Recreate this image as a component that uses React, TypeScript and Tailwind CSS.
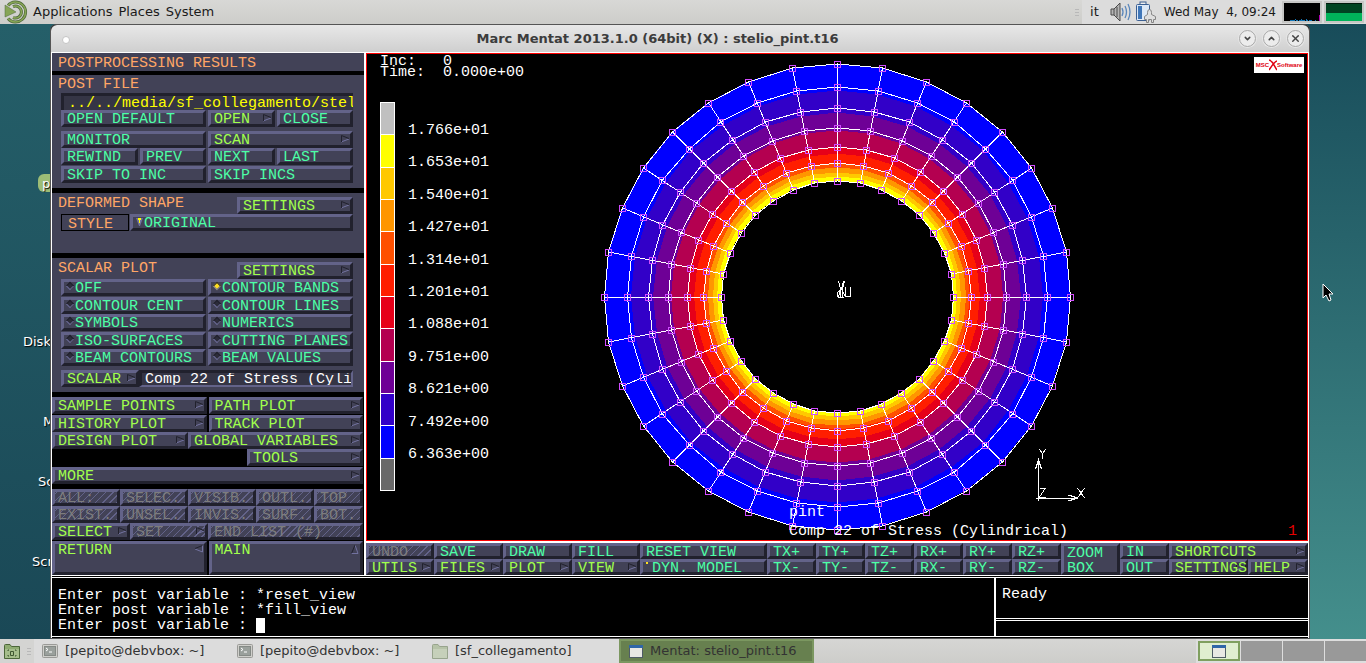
import type { ReactNode } from 'react'
import { ChevronDown, ChevronUp, X } from 'lucide-react'

const legend = [
  { color: '#c0c0c0', label: '1.766e+01' },
  { color: '#ffff00', label: '1.653e+01' },
  { color: '#ffc800', label: '1.540e+01' },
  { color: '#ff9600', label: '1.427e+01' },
  { color: '#ff5000', label: '1.314e+01' },
  { color: '#ff1e00', label: '1.201e+01' },
  { color: '#e60019', label: '1.088e+01' },
  { color: '#b40050', label: '9.751e+00' },
  { color: '#6e0096', label: '8.621e+00' },
  { color: '#3200c8', label: '7.492e+00' },
  { color: '#0000ff', label: '6.363e+00' },
  { color: '#696969', label: '' },
]

// outer radius of every contour band, from the rim inwards
const bands = [
  { r: 233, color: '#0000ff' },
  { r: 206, color: '#3200c8' },
  { r: 184, color: '#6e0096' },
  { r: 166, color: '#b40050' },
  { r: 150, color: '#e60019' },
  { r: 143, color: '#ff1e00' },
  { r: 133, color: '#ff5000' },
  { r: 129, color: '#ff9600' },
  { r: 124, color: '#ffc800' },
  { r: 120, color: '#ffff00' },
  { r: 116, color: '#000000' },
]

const meshRadii = [233, 210, 189, 169, 150, 134, 116]
const sectors = Array.from({ length: 32 }, (_, i) => (i * Math.PI) / 16)
const cx = 837
const cy = 296

const point = (r: number, a: number) => [Math.round(cx + r * Math.cos(a)), Math.round(cy + r * Math.sin(a))]
const ring = (r: number) => sectors.map((a) => point(r, a).join(',')).join(' ')

const tones = {
  mint: 'text-[#4dffa6]',
  lime: 'text-[#a0ff4d]',
  orange: 'text-[#ffa666]',
  off: 'text-[#7d7d7d]',
}

const heights = {
  row: 'h-[17px]',
  short: 'h-4',
  shortDouble: 'h-8',
  double: 'h-[34px]',
}

const raised =
  'relative flex min-w-0 items-start whitespace-pre border-[3px] border-t-[#636389] border-l-[#636389] border-r-[#21212d] border-b-[#21212d] bg-[#424257] pl-[3px] text-left leading-[14px]'
const hatch =
  'bg-[repeating-linear-gradient(135deg,#636389_0px,#636389_1px,transparent_1px,transparent_5px)] bg-origin-border'

type Dir = 'right' | 'left' | 'up'

const Arrow = ({ dir }: { dir: Dir }) => (
  <svg className="absolute top-0 right-0" width="10" height="10" viewBox="0 0 10 10" fill="none">
    {dir === 'right' && (
      <>
        <path d="M9 5L1 8" stroke="#7272a0" />
        <path d="M1.500 8V1.500L9 4.500" stroke="#21212d" />
      </>
    )}
    {dir === 'left' && (
      <>
        <path d="M8.500 1V8L1 5" stroke="#7272a0" />
        <path d="M1 4.500L8.500 1.500" stroke="#21212d" />
      </>
    )}
    {dir === 'up' && (
      <>
        <path d="M5 1L8 9.500H1" stroke="#7272a0" />
        <path d="M5 1L1.500 9.500" stroke="#21212d" />
      </>
    )}
  </svg>
)

type KeyProps = {
  children: ReactNode
  tone?: keyof typeof tones
  size?: keyof typeof heights
  arrow?: Dir
  className?: string
}

const Key = ({ children, tone = 'mint', size = 'row', arrow, className = '' }: KeyProps) => (
  <button
    type="button"
    disabled={tone === 'off'}
    className={`${raised} ${heights[size]} ${tones[tone]} ${tone === 'off' ? hatch : ''} ${className}`}
  >
    {arrow && <Arrow dir={arrow} />}
    <span className="relative">{children}</span>
  </button>
)

const Option = ({ label, checked = false }: { label: string; checked?: boolean }) => (
  <label className={`${raised} h-[17px] gap-[2px] ${tones.mint}`}>
    <input
      type="radio"
      name="scalar-plot"
      defaultChecked={checked}
      className="mt-px size-[6px] shrink-0 rotate-45 appearance-none border border-t-[#21212d] border-r-[#636389] border-b-[#7272a0] border-l-[#21212d] bg-[#2c2c3a] checked:bg-yellow-300"
    />
    {label}
  </label>
)

const options = [
  'OFF',
  'CONTOUR BANDS',
  'CONTOUR CENT',
  'CONTOUR LINES',
  'SYMBOLS',
  'NUMERICS',
  'ISO-SURFACES',
  'CUTTING PLANES',
  'BEAM CONTOURS',
  'BEAM VALUES',
]

const section = 'border-b-[5px] border-black bg-[#424257] pr-[11px] pl-[9px]'
const halves = 'grid grid-cols-2 gap-x-[2px]'

const SideMenu = () => (
  <aside className="w-[314px] shrink-0 border-r-2 border-white bg-black">
    <h2 className="border-b-4 border-black bg-[#424257] pt-[4px] pl-[6px] leading-[14px] text-[#ffa666]">POSTPROCESSING RESULTS</h2>

    <section className={`${section} pb-[5px]`}>
      <label htmlFor="post-file" className="-ml-[3px] block pt-px leading-[17px] text-[#ffa666]">
        POST FILE
      </label>
      <input
        id="post-file"
        defaultValue="../../media/sf_collegamento/stel"
        className="block h-[17px] w-full border-t-[3px] border-l-[3px] border-t-[#21212d] border-l-[#21212d] bg-[#353545] pl-[4px] leading-[14px] text-[#ffff00]"
      />
      <div className="grid grid-cols-[145fr_67fr_76fr] gap-x-[2px]">
        <Key>OPEN DEFAULT</Key>
        <Key tone="lime" arrow="right">OPEN</Key>
        <Key>CLOSE</Key>
      </div>
      <div className={`${halves} mt-[4px]`}>
        <Key>MONITOR</Key>
        <Key tone="lime" arrow="right">SCAN</Key>
      </div>
      <div className="grid grid-cols-[77fr_66fr_67fr_76fr] gap-x-[2px]">
        <Key>REWIND</Key>
        <Key>PREV</Key>
        <Key>NEXT</Key>
        <Key>LAST</Key>
      </div>
      <div className={`${halves} mt-px`}>
        <Key>SKIP TO INC</Key>
        <Key>SKIP INCS</Key>
      </div>
    </section>

    <section className={`${section} pt-[4px] pb-[22px]`}>
      <div className="flex justify-between">
        <h3 className="-ml-[3px] leading-[14px] text-[#ffa666]">DEFORMED SHAPE</h3>
        <Key tone="lime" arrow="right" className="w-[116px]">SETTINGS</Key>
      </div>
      <div className="flex gap-x-px">
        <label htmlFor="style" className="h-[17px] w-[68px] border border-black pl-[6px] leading-[20px] text-[#ffa666]">
          STYLE
        </label>
        <div className={`${raised} h-[17px] flex-1 ${tones.mint}`}>
          <svg className="mt-px mr-px" width="7" height="8" viewBox="0 0 7 8">
            <path d="M0 0H7L4 8H3Z" fill="#7272a0" />
            <path d="M2 0H5V2H4V5H3V2H2Z" fill="#ffff00" />
          </svg>
          <select id="style" className="h-[14px] min-w-0 flex-1 appearance-none leading-[14px]">
            <option>ORIGINAL</option>
          </select>
        </div>
      </div>
    </section>

    <section className={`${section} pt-[4px] pb-[5px]`}>
      <div className="flex justify-between">
        <h3 className="-ml-[3px] leading-[14px] text-[#ffa666]">SCALAR PLOT</h3>
        <Key tone="lime" arrow="right" className="w-[116px]">SETTINGS</Key>
      </div>
      <div className={`${halves} h-[87px] content-between`}>
        {options.map((label) => (
          <Option key={label} label={label} checked={label === 'CONTOUR BANDS'} />
        ))}
      </div>
      <div className="mt-[4px] flex">
        <Key tone="lime" arrow="right" className="w-[78px]">SCALAR</Key>
        <input
          aria-label="Scalar"
          defaultValue="Comp 22 of Stress (Cyli"
          className="h-[17px] min-w-0 flex-1 border-[3px] border-t-[#21212d] border-r-2 border-b-2 border-r-[#636389] border-b-[#636389] border-l-[#21212d] bg-[#353545] pl-[3px] text-white"
        />
      </div>
    </section>

    <nav className="pr-px pb-[5px]">
      <div className={`${halves} gap-y-px`}>
        <Key tone="lime" arrow="right">SAMPLE POINTS</Key>
        <Key tone="lime" arrow="right">PATH PLOT</Key>
        <Key tone="lime" arrow="right">HISTORY PLOT</Key>
        <Key tone="lime" arrow="right">TRACK PLOT</Key>
      </div>
      <div className="grid grid-cols-[136fr_175fr]">
        <Key tone="lime" arrow="right">DESIGN PLOT</Key>
        <Key tone="lime" arrow="right">GLOBAL VARIABLES</Key>
      </div>
      <Key tone="lime" arrow="right" className="ml-auto w-[116px]">TOOLS</Key>
      <Key tone="lime" arrow="right" className="mt-px w-full">MORE</Key>
    </nav>

    <div className="pr-px">
      <div className="grid grid-cols-[68fr_68fr_68fr_58fr_49fr]">
        {['ALL:', 'SELEC.', 'VISIB.', 'OUTL.', 'TOP', 'EXIST.', 'UNSEL.', 'INVIS.', 'SURF.', 'BOT.'].map((label) => (
          <Key key={label} tone="off">{label}</Key>
        ))}
      </div>
      <div className="grid grid-cols-[78fr_78fr_155fr]">
        <Key tone="lime" arrow="right">SELECT</Key>
        <Key tone="off" arrow="right">SET</Key>
        <Key tone="off">END LIST (#)</Key>
      </div>
      <div className={`${halves} mt-px`}>
        <Key tone="lime" size="double" arrow="left">RETURN</Key>
        <Key tone="lime" size="double" arrow="up">MAIN</Key>
      </div>
    </div>
  </aside>
)

const Mesh = () => (
  <svg
    className="absolute inset-0 size-full"
    viewBox="367 54 940 485"
    fill="none"
    stroke="white"
    strokeWidth="1"
    shapeRendering="crispEdges"
  >
    {bands.map((b) => (
      <polygon key={b.r} points={ring(b.r)} fill={b.color} stroke="none" />
    ))}
    <g transform="translate(0.5 0.5)">
      {meshRadii.map((r) => (
        <polygon key={r} points={ring(r)} />
      ))}
      {sectors.map((a) => {
        const [x1, y1] = point(116, a)
        const [x2, y2] = point(233, a)
        return <line key={a} x1={x1} y1={y1} x2={x2} y2={y2} />
      })}
      {meshRadii.map((r) =>
        sectors.map((a) => {
          const [x, y] = point(r, a)
          return <rect key={`${r}-${a}`} x={x - 3} y={y - 3} width="6" height="6" stroke="#d14dff" />
        }),
      )}
      <path d="M838 280L840 288L838 296M843 280L841 288L845 296M837 296H843M837 296V292L839 289M840 288V296M844 280L842 288V296M845 286V295H850V286" />
      <path d="M1038 500V459M1035 468L1038 459L1041 468M1035 497H1077M1068 494L1077 497L1068 500" />
      <path d="M1039 448L1042 453L1045 448M1042 453V458M1077 487L1084 497M1084 487L1077 497M1039 487H1045L1039 496H1045" />
    </g>
    <g fill="white" stroke="none" className="font-['Liberation_Mono',monospace] text-[15px]">
      <text x="789" y="515">pint</text>
      <text x="789" y="534">Comp 22 of Stress (Cylindrical)</text>
      <text x="1288" y="534" fill="#e60000">1</text>
    </g>
  </svg>
)

const Viewport = () => (
  <div className="relative flex-1 border border-[#f00] bg-black pt-[2px] pl-[13px] text-white">
    <Mesh />
    <div className="relative whitespace-pre leading-[11px]">
      <p>Inc:   0</p>
      <p>Time:  0.000e+00</p>
    </div>
    <div className="relative mt-[24px] flex gap-x-[13px]">
      <ul className="flex h-[389px] w-[15px] flex-col gap-px border border-white bg-white">
        {legend.map((l) => (
          <li key={l.color} className="flex-1" style={{ backgroundColor: l.color }} />
        ))}
      </ul>
      <ul className="mt-[12px] flex h-[357px] flex-col">
        {legend.slice(0, -1).map((l) => (
          <li key={l.label} className="flex flex-1 items-center">{l.label}</li>
        ))}
      </ul>
    </div>
    <div className="absolute top-[3px] right-[3px] flex h-4 w-[50px] items-center justify-center bg-white font-['Liberation_Sans',sans-serif] text-[6px] font-bold text-[#e00010]">
      MSC
      <svg width="8" height="12" viewBox="0 0 8 12" fill="none" stroke="#e00010">
        <path d="M0 1C4 2 5 7 8 11M8 2C5 3 2 8 0 11" strokeWidth="1.500" />
      </svg>
      Software
    </div>
  </div>
)

const Toolbar = () => (
  <div className="grid grid-cols-[68fr_69fr_69fr_68fr_127fr_49fr_49fr_49fr_49fr_49fr_49fr_59fr_49fr_79fr_60fr] border-t-2 border-white bg-[#21212d]">
    <Key size="short" tone="off">UNDO</Key>
    <Key size="short">SAVE</Key>
    <Key size="short">DRAW</Key>
    <Key size="short">FILL</Key>
    <Key size="short">RESET VIEW</Key>
    {['TX+', 'TY+', 'TZ+', 'RX+', 'RY+', 'RZ+'].map((label) => (
      <Key key={label} size="short">{label}</Key>
    ))}
    <Key size="shortDouble" className="row-span-2">
      <span className="block leading-[15px]">ZOOM<br />BOX</span>
    </Key>
    <Key size="short">IN</Key>
    <Key size="short" tone="lime" arrow="right" className="col-span-2">SHORTCUTS</Key>
    <Key size="short" tone="lime" arrow="right">UTILS</Key>
    <Key size="short" tone="lime" arrow="right">FILES</Key>
    <Key size="short" tone="lime" arrow="right">PLOT</Key>
    <Key size="short" tone="lime" arrow="right">VIEW</Key>
    <Key size="short">
      <i className="mr-[4px] inline-block size-[2px] -translate-y-2 bg-yellow-300" />
      DYN. MODEL
    </Key>
    {['TX-', 'TY-', 'TZ-', 'RX-', 'RY-', 'RZ-'].map((label) => (
      <Key key={label} size="short">{label}</Key>
    ))}
    <Key size="short">OUT</Key>
    <Key size="short" tone="lime" arrow="right">SETTINGS</Key>
    <Key size="short" tone="lime" arrow="right">HELP</Key>
  </div>
)

const Console = () => (
  <div className="flex border-t border-white bg-black pt-px pb-px text-white">
    <div className="flex-1 border-t border-b border-white pt-[10px] pb-[3px] pl-[6px] leading-[15px]">
      <p>Enter post variable : *reset_view</p>
      <p>Enter post variable : *fill_view</p>
      <div className="flex">
        <label htmlFor="command" className="whitespace-pre">{'Enter post variable : '}</label>
        <span className="h-[15px] w-[9px] bg-white" />
        <input id="command" className="h-[15px] min-w-0 flex-1 outline-none" />
      </div>
    </div>
    <div className="flex w-[314px] flex-col gap-px border-l-2 border-white">
      <div className="flex-1 border-t border-b border-white pt-[9px] pl-[6px]">Ready</div>
      <div className="h-[17px] border-t border-b border-white" />
    </div>
  </div>
)

const round =
  'flex size-[17px] items-center justify-center rounded-full border border-[#a8a8a8] bg-[#ececec] text-[#444] shadow-[0_0_0_1px_#e6e6e6]'

const MentatWindow = () => (
  <main className="relative mr-[56px] ml-[50px] flex flex-1 flex-col rounded-t-md border border-[#555] bg-black">
    <header className="relative flex h-[27px] items-center rounded-t-md bg-linear-to-b from-[#e8e8e8] to-[#cfcfcf] pr-[5px] pl-[11px]">
      <span className="mt-[3px] size-[8px] rounded-full border border-[#c4c4c4] bg-white" />
      <h1 className="flex-1 pl-[6px] text-center font-['DejaVu_Sans',sans-serif] text-[13px] font-bold text-[#3c3c3c]">
        Marc Mentat 2013.1.0 (64bit) (X) : stelio_pint.t16
      </h1>
      <div className="flex gap-[7px]">
        <button type="button" aria-label="Minimize" className={round}><ChevronDown size={9} strokeWidth={4} /></button>
        <button type="button" aria-label="Maximize" className={round}><ChevronUp size={9} strokeWidth={4} /></button>
        <button type="button" aria-label="Close" className={round}><X size={11} strokeWidth={3} /></button>
      </div>
    </header>
    <div className="flex flex-1 flex-col border-x border-t border-white font-['Liberation_Mono',monospace] text-[15px] leading-[15px]">
      <div className="flex">
        <SideMenu />
        <div className="flex min-w-0 flex-1 flex-col">
          <Viewport />
          <Toolbar />
        </div>
      </div>
      <Console />
    </div>
  </main>
)

const MateLogo = () => (
  <svg width="24" height="24" viewBox="0 0 24 24" fill="none">
    <path d="M4 5.500A10 10 0 1 1 4 18.500" stroke="#4f6a3c" strokeWidth="3" />
    <path d="M4 5.500A10 10 0 1 1 4 18.500" stroke="#87a556" strokeWidth="1.500" />
    <path d="M9 6.500A6 6 0 1 1 9 17.500" stroke="#4f6a3c" strokeWidth="3" />
    <path d="M9 6.500A6 6 0 1 1 9 17.500" stroke="#87a556" strokeWidth="1.500" />
    <path d="M1 5L12 12L1 17Z" fill="#87a556" stroke="#4f6a3c" strokeWidth="0.500" />
  </svg>
)

const Speaker = () => (
  <svg width="23" height="22" viewBox="0 0 23 22" fill="none">
    <path d="M1 8H4L10 2V20L4 14H1Z" fill="#b5b5b5" stroke="#4a4a4a" />
    <path d="M4 8V14M7 6V16" stroke="#4a4a4a" />
    <path d="M12 7Q14 11 12 15M15 5Q18 11 15 17M18 3Q22 11 18 19" stroke="#5b87bb" strokeWidth="1.300" />
  </svg>
)

const Battery = () => (
  <svg width="22" height="22" viewBox="0 0 22 22">
    <rect x="5" y="1" width="6" height="3" fill="#eee" stroke="#3b5f92" />
    <rect x="1.500" y="3.500" width="13" height="16" rx="1" fill="#dce8f6" stroke="#3b5f92" />
    <path d="M3 5H7V18H3Z" fill="#3f76b8" />
    <path d="M9.500 18.500V15.500L12.500 13.500V11.500Q12.500 8.500 14.500 8.500Q16.500 8.500 16.500 11.500V13.500L20.500 15.500V18.500H18.500V21.500H16.500V18.500H13.500V21.500H11.500V18.500Z" fill="#dedede" stroke="#858585" />
  </svg>
)

const Terminal = () => (
  <svg width="16" height="14" viewBox="0 0 16 14">
    <rect x="0.500" y="0.500" width="15" height="13" rx="1" fill="#cfcfcb" stroke="#9a9a97" />
    <rect x="2.500" y="2.500" width="11" height="9" fill="#9aa09c" stroke="#858a86" />
    <path d="M4 4L6 5.500L4 7M7 8H10" stroke="white" fill="none" />
  </svg>
)

const Folder = ({ home = false }: { home?: boolean }) => (
  <svg width="16" height="15" viewBox="0 0 16 15">
    <path d="M0.500 14.500V1.500Q0.500 0.500 1.500 0.500H6L7.500 2.500H15.500V14.500Z" fill={home ? '#8fac72' : '#b6c3a8'} stroke={home ? '#4c6739' : '#98a48d'} />
    <path d="M1 5H15V14H1Z" fill={home ? '#a6be8c' : '#c6d0ba'} />
    {home && <path d="M4 7V6H5M11 6H12V7M12 11V12H11M5 12H4V11M6.500 7.500H9.500V11.500H6.500Z" stroke="#3f5730" fill="none" />}
  </svg>
)

const AppWindow = () => (
  <svg width="14" height="13" viewBox="0 0 14 13">
    <rect x="0.500" y="0.500" width="13" height="12" fill="#e8e8e4" stroke="#4f5c66" />
    <rect x="0" y="0" width="14" height="3" fill="#2f66a8" />
  </svg>
)

const Grip = () => (
  <span className="flex flex-col gap-[2px]">
    <i className="h-px w-1 bg-[#b8b8b8]" />
    <i className="h-px w-1 bg-[#b8b8b8]" />
    <i className="h-px w-1 bg-[#b8b8b8]" />
  </span>
)

const TopPanel = () => (
  <header className="flex h-6 items-center bg-linear-to-b from-[#d8d8d6] to-[#cdcdca] pl-[4px] text-[#1a1a1a]">
    <MateLogo />
    <nav className="ml-[5px] flex gap-[6px]">
      <button type="button">Applications</button>
      <button type="button">Places</button>
      <button type="button">System</button>
    </nav>
    <span className="mr-[3px] ml-auto"><Grip /></span>
    <div className="flex h-6 items-center bg-[#dcdcdc] pr-[2px]">
      <span className="ml-[8px]">it</span>
      <span className="ml-[11px]"><Speaker /></span>
      <span className="ml-[2px]"><Battery /></span>
      <time className="ml-[7px] whitespace-pre text-[12px]">Wed May  4, 09:24</time>
      <svg className="ml-[6px]" width="40" height="22" shapeRendering="crispEdges">
        <rect width="40" height="22" fill="#c6c6c4" />
        <rect x="2" y="2" width="36" height="18" fill="black" />
        <path d="M8 19.500H13M14 19.500H16M17 19.500H23M24 19.500H26M27 19.500H30M33 19.500H34M13 18.500H14M19 18.500H20M24 18.500H25" stroke="#1477b8" />
        <rect x="37" y="14" width="1" height="6" fill="#b000b0" />
      </svg>
      <svg className="ml-[2px]" width="40" height="22" shapeRendering="crispEdges">
        <rect width="40" height="22" fill="#c6c6c4" />
        <rect x="2" y="2" width="36" height="18" fill="#001a0c" />
        <rect x="2" y="3" width="36" height="9" fill="#004422" />
        <rect x="2" y="12" width="36" height="8" fill="#00b45a" />
      </svg>
    </div>
  </header>
)

const tab = 'flex w-[195px] items-center gap-[7px] pl-[8px] text-left'

const Taskbar = () => (
  <footer className="flex h-6 items-stretch bg-linear-to-b from-[#d6d6d4] to-[#cdcdca] text-[#333]">
    <div className="flex bg-[#dcdcdc]">
      <button type="button" aria-label="Show desktop" className="flex w-6 items-center justify-center bg-[#d4d4d2]"><Folder home /></button>
      <span className="flex w-[10px] items-center justify-center bg-[#d4d4d2]"><Grip /></span>
      <button type="button" className={tab}><Terminal />[pepito@debvbox: ~]</button>
      <button type="button" className={tab}><Terminal />[pepito@debvbox: ~]</button>
      <button type="button" className={tab}><Folder />[sf_collegamento]</button>
      <button type="button" className={`${tab} border-2 border-[#7b9760] bg-[#67804f]`}><AppWindow />Mentat: stelio_pint.t16</button>
    </div>
    <div className="ml-auto flex gap-px border-2 border-r-0 border-[#dedede] bg-[#dedede]">
      <button type="button" aria-label="Workspace 1" className="flex w-[42px] items-center justify-center border-2 border-[#7f9f5f] bg-[#e0eed0]"><AppWindow /></button>
      <button type="button" aria-label="Workspace 2" className="w-[41px] bg-[#999]" />
      <button type="button" aria-label="Workspace 3" className="w-[41px] bg-[#999]" />
      <button type="button" aria-label="Workspace 4" className="w-[41px] bg-[#999]" />
    </div>
  </footer>
)

export default function App() {
  return (
    <div className="flex min-h-screen flex-col font-['DejaVu_Sans',sans-serif] text-[13px]">
      <TopPanel />
      <div className="relative flex flex-1 flex-col bg-[linear-gradient(#255f69,#1a4856),linear-gradient(#184c5a,#448f8c)] bg-[length:50%_100%] bg-no-repeat [background-position:left,right]">
        <div className="absolute inset-y-0 left-0 w-[60px] overflow-hidden text-white [text-shadow:1px_1px_1px_black]">
          <span className="absolute top-[150px] left-[38px] h-[18px] w-8 rounded-md bg-[#9dbd76] pl-[4px]">p</span>
          <span className="absolute top-[308px] left-[23px]">Disk</span>
          <span className="absolute top-[388px] left-[43px]">M</span>
          <span className="absolute top-[448px] left-[38px]">Sc</span>
          <span className="absolute top-[528px] left-[32px]">Scr</span>
        </div>
        <MentatWindow />
        <svg className="absolute top-[259px] left-[1322px]" width="13" height="19" viewBox="0 0 13 19">
          <path d="M1 1V15L4 12L7 18L9 17L7 11H11Z" fill="black" stroke="white" />
        </svg>
      </div>
      <Taskbar />
    </div>
  )
}
